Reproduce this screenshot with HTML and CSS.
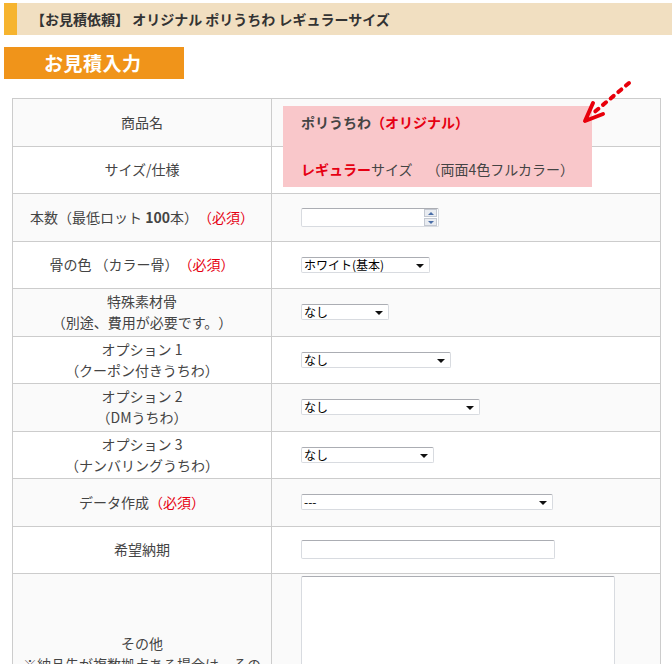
FILE: index.html
```html
<!DOCTYPE html>
<html lang="ja">
<head>
<meta charset="utf-8">
<title>お見積依頼</title>
<link rel="stylesheet" href="styles.css">
</head>
<body>
<div class="page">
  <h1 class="head-bar">【お見積依頼】 オリジナル ポリうちわ レギュラーサイズ</h1>
  <h2 class="tab">お見積入力</h2>
  <div class="form-wrap">
    <div class="pink-box"></div>
    <svg class="arrow" width="64" height="50" viewBox="0 0 64 50">
      <path d="M57 5 L19 37" stroke="#e8000b" stroke-width="4" stroke-linecap="round" stroke-dasharray="4 6" fill="none"/>
      <path d="M21 25 L13 43 L31 36" stroke="#e8000b" stroke-width="4" stroke-linecap="round" stroke-linejoin="round" fill="none"/>
    </svg>
    <table class="form">
      <tr class="odd">
        <th>商品名</th>
        <td><span class="val strong">ポリうちわ<span class="red">（オリジナル）</span></span></td>
      </tr>
      <tr>
        <th>サイズ/仕様</th>
        <td><span class="val"><span class="red strong">レギュラー</span>サイズ　（両面4色フルカラー）</span></td>
      </tr>
      <tr class="odd">
        <th>本数（最低ロット <b>100</b>本）<span class="req">（必須）</span></th>
        <td>
          <span class="num">
            <input class="num-input" type="text">
            <span class="spin"><span class="spin-btn up"></span><span class="spin-btn down"></span></span>
          </span>
        </td>
      </tr>
      <tr>
        <th>骨の色 （カラー骨）<span class="req">（必須）</span></th>
        <td><span class="sel w129"><select><option>ホワイト(基本)</option></select></span></td>
      </tr>
      <tr class="odd">
        <th>特殊素材骨<br>（別途、費用が必要です。）</th>
        <td><span class="sel w88"><select><option>なし</option></select></span></td>
      </tr>
      <tr>
        <th>オプション 1<br>（クーポン付きうちわ）</th>
        <td><span class="sel w150"><select><option>なし</option></select></span></td>
      </tr>
      <tr class="odd">
        <th>オプション 2<br>（DMうちわ）</th>
        <td><span class="sel w179"><select><option>なし</option></select></span></td>
      </tr>
      <tr>
        <th>オプション 3<br>（ナンバリングうちわ）</th>
        <td><span class="sel w133"><select><option>なし</option></select></span></td>
      </tr>
      <tr class="odd">
        <th>データ作成<span class="req">（必須）</span></th>
        <td><span class="sel w252"><select><option>---</option></select></span></td>
      </tr>
      <tr>
        <th>希望納期</th>
        <td><input class="text-input" type="text"></td>
      </tr>
      <tr class="odd tall">
        <th>その他<br>※納品先が複数拠点ある場合は、その<br>詳細をご記入ください。</th>
        <td class="top"><textarea class="memo"></textarea></td>
      </tr>
    </table>
  </div>
</div>
</body>
</html>
```

FILE: styles.css
```css
* { box-sizing: border-box; }
html, body {
  margin: 0;
  padding: 0;
  background: #fff;
}
body {
  font-family: "Noto Sans CJK JP", "Noto Sans", sans-serif;
  font-size: 14px;
  color: #444;
  text-spacing-trim: space-all;
}
.page {
  padding: 3px 0 0 4px;
}
.head-bar {
  margin: 0;
  height: 32px;
  background: #f1dfc1;
  border-left: 13px solid #f6b42f;
  padding-left: 14px;
  font-size: 14px;
  font-weight: bold;
  line-height: 32px;
  color: #333;
}
.tab {
  margin: 12px 0 0 0;
  width: 180px;
  height: 32px;
  background: #f0941a;
  color: #fff;
  font-size: 19px;
  font-weight: bold;
  line-height: 32px;
  padding-left: 40px;
  letter-spacing: 0.5px;
}
.form-wrap {
  position: relative;
  margin: 19px 0 0 8px;
  width: 649px;
}
.pink-box {
  position: absolute;
  left: 271px;
  top: 8px;
  width: 309px;
  height: 81px;
  background: #f9c7ca;
  z-index: 0;
}
.arrow {
  position: absolute;
  left: 560px;
  top: -20px;
  z-index: 2;
}
.form {
  width: 649px;
  border-collapse: collapse;
}
.form th, .form td {
  border: 1px solid #ccc;
  height: 47.5px;
  padding: 0;
  line-height: 21px;
  vertical-align: middle;
}
.form th {
  width: 259px;
  font-weight: normal;
  text-align: center;
  color: #444;
}
.form th b { font-weight: bold; }
.form td {
  padding-left: 29px;
  text-align: left;
}
.form tr.odd th, .form tr.odd td { background: #fafafa; }
.form td.top { vertical-align: top; padding-top: 2px; }
.val {
  position: relative;
  z-index: 1;
}
.strong { font-weight: bold; }
.red { color: #e60012; }
.req { color: #e60012; }

.num {
  position: relative;
  display: block;
  width: 138px;
  height: 19px;
}
.num-input {
  display: block;
  width: 138px;
  height: 19px;
  margin: 0;
  border: 1px solid #d8dbe0;
  border-top-color: #abadb3;
  border-radius: 2px;
  background: #fff;
  padding: 0 2px;
  font-size: 12px;
}
.spin {
  position: absolute;
  right: 2px;
  top: 1px;
  width: 13px;
  height: 17px;
  display: flex;
  flex-direction: column;
  gap: 1px;
}
.spin-btn {
  position: relative;
  flex: 1;
  background: #e9ecf1;
  border: 1px solid #c3c8d1;
}
.spin-btn::after {
  content: "";
  position: absolute;
  left: 3px;
  top: 2px;
  border-left: 3px solid transparent;
  border-right: 3px solid transparent;
}
.spin-btn.up::after { border-bottom: 3px solid #4a6ea8; }
.spin-btn.down::after { border-top: 3px solid #4a6ea8; }

.sel {
  position: relative;
  display: block;
  height: 16px;
}
.sel select {
  -webkit-appearance: none;
  appearance: none;
  display: block;
  width: 100%;
  height: 16px;
  margin: 0;
  padding: 0 0 0 2px;
  border: 1px solid #d8dbe0;
  border-top-color: #abadb3;
  border-radius: 2px;
  background: #fff;
  font-family: "Noto Sans CJK JP", sans-serif;
  font-size: 12px;
  line-height: 14px;
  color: #000;
}
.sel::after {
  content: "";
  position: absolute;
  right: 6px;
  top: 7px;
  border-left: 4px solid transparent;
  border-right: 4px solid transparent;
  border-top: 4px solid #111;
  pointer-events: none;
}
.w88 { width: 88px; }
.w129 { width: 129px; }
.w133 { width: 133px; }
.w150 { width: 150px; }
.w179 { width: 179px; }
.w252 { width: 252px; }

.text-input {
  display: block;
  width: 254px;
  height: 19px;
  margin: 0;
  border: 1px solid #d8dbe0;
  border-top-color: #abadb3;
  border-radius: 2px;
  background: #fff;
}
.memo {
  display: block;
  width: 314px;
  height: 176px;
  margin: 0;
  border: 1px solid #d8dbe0;
  border-top-color: #abadb3;
  border-radius: 2px;
  background: #fff;
  resize: none;
}
.tall th { height: 182px; }
```
